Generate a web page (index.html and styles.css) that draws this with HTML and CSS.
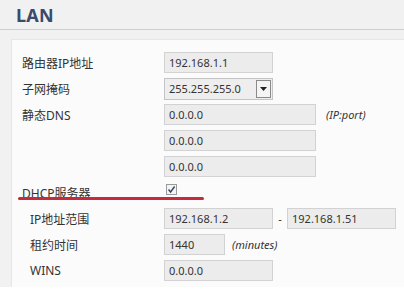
FILE: index.html
```html
<!DOCTYPE html>
<html>
<head>
<meta charset="utf-8">
<link rel="stylesheet" href="styles.css">
</head>
<body>
<div class="page">
  <div class="header"><h1 class="title">LAN</h1></div>
  <div class="panel">
    <div class="row">
      <div class="label">路由器IP地址</div>
      <div class="field"><div class="input w108">192.168.1.1</div></div>
    </div>
    <div class="row">
      <div class="label">子网掩码</div>
      <div class="field">
        <div class="select w108"><span>255.255.255.0</span>
          <span class="dd"><svg width="7" height="4" viewBox="0 0 7 4"><path d="M0 0h7L3.5 4z" fill="#222"/></svg></span>
        </div>
      </div>
    </div>
    <div class="row">
      <div class="label">静态DNS</div>
      <div class="field"><div class="input w151">0.0.0.0</div><span class="hint">(IP:port)</span></div>
    </div>
    <div class="row">
      <div class="label"></div>
      <div class="field"><div class="input w151">0.0.0.0</div></div>
    </div>
    <div class="row">
      <div class="label"></div>
      <div class="field"><div class="input w151">0.0.0.0</div></div>
    </div>
    <div class="row dhcp">
      <div class="label">DHCP服务器</div>
      <div class="field top"><span class="check"><svg width="9" height="9" viewBox="0 0 9 9"><path d="M1.5 4.5L3.6 7 7.6 1.5" fill="none" stroke="#3a4560" stroke-width="1.4"/></svg></span></div>
      <div class="redline"></div>
    </div>
    <div class="row">
      <div class="label sub">IP地址范围</div>
      <div class="field"><div class="input w108">192.168.1.2</div><span class="dash">-</span><div class="input w108">192.168.1.51</div></div>
    </div>
    <div class="row">
      <div class="label sub">租约时间</div>
      <div class="field"><div class="input w60">1440</div><span class="hint2">(minutes)</span></div>
    </div>
    <div class="row">
      <div class="label sub">WINS</div>
      <div class="field"><div class="input w108">0.0.0.0</div></div>
    </div>
  </div>
</div>
</body>
</html>
```

FILE: styles.css
```css
* { box-sizing: border-box; }
html, body { margin: 0; padding: 0; }
body {
  width: 404px;
  height: 298px;
  overflow: hidden;
  background: #ffffff;
  font-family: "Noto Sans", "Noto Sans CJK SC", sans-serif;
  color: #333;
}
.page {
  background: #f1f1f1;
  height: 287px;
  padding-left: 11px;
}
.header {
  height: 30px;
  margin-left: -11px;
  border-bottom: 1px solid #cfcfcf;
  padding-left: 16px;
}
.title {
  margin: 0;
  font-size: 18px;
  line-height: 30px;
  font-weight: 700;
  color: #3c4a6c;
  letter-spacing: 0.2px;
}
.panel {
  margin-top: 9px;
  background: #fbfbfb;
  border-left: 1px solid #e6e6e6;
  border-top: 1px solid #e6e6e6;
  height: 248px;
  padding-top: 12px;
  display: flex;
  flex-direction: column;
  gap: 5px;
}
.row {
  display: grid;
  grid-template-columns: 152px 1fr;
  height: 21px;
  align-items: center;
  position: relative;
}
.label {
  padding-left: 10px;
  font-size: 12px;
  color: #333;
  white-space: nowrap;
}
.label.sub { padding-left: 18px; }
.field {
  display: flex;
  align-items: center;
  height: 21px;
}
.field.top { align-items: flex-start; padding-top: 2px; }
.input, .select {
  height: 21px;
  background: #ececec;
  border: 1px solid #d2d2d2;
  font-size: 11px;
  line-height: 19px;
  padding-left: 4px;
  color: #333;
}
.select {
  height: 22px;
  display: flex;
  align-items: center;
  justify-content: space-between;
  padding-right: 1px;
  border-color: #c4c4c4;
  background: #eeeeee;
}
.dd {
  width: 15px;
  height: 18px;
  border: 1px solid #8a8a8a;
  background: #f4f4f4;
  display: flex;
  align-items: center;
  justify-content: center;
}
.w108 { width: 109px; }
.w151 { width: 152px; }
.w60 { width: 61px; }
.hint {
  margin-left: 10px;
  font-style: italic;
  font-size: 11px;
  color: #333;
}
.hint2 {
  margin-left: 7px;
  font-style: italic;
  font-size: 11px;
  color: #333;
}
.dash {
  width: 14px;
  text-align: center;
  font-size: 11px;
}
.check {
  width: 11px;
  height: 11px;
  margin-left: 2px;
  border: 1px solid #9a9a9a;
  background: #f4f4f4;
  display: flex;
  align-items: center;
  justify-content: center;
}
.redline {
  position: absolute;
  left: 6px;
  top: 15px;
  width: 186px;
  height: 3px;
  border-radius: 2px;
  background: #c62b3d;
}
```
